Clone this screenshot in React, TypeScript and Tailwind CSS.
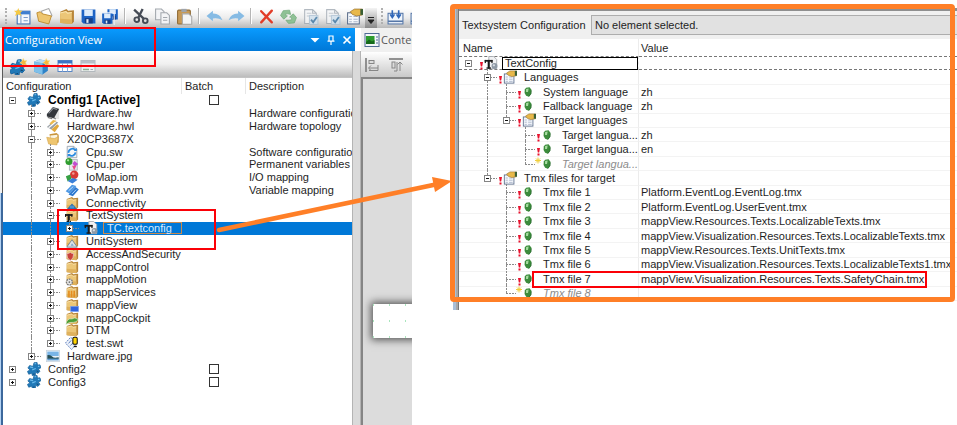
import type { ReactNode } from "react";

const FONT = "font-['Liberation_Sans',Arial,sans-serif]";

/* ---------- icons ---------- */

type IconName =
  | "gear" | "chip" | "topology" | "folderOpen" | "sw" | "per" | "io" | "pv"
  | "connectivity" | "textsystem" | "textconfig" | "unit" | "security" | "folder"
  | "motion" | "services" | "view" | "cockpit" | "swt" | "image" | "bulb" | "group"
  | "new" | "open" | "save" | "saveAll" | "cut" | "copy" | "paste" | "undo" | "redo"
  | "delete" | "refresh" | "docCheck" | "props" | "build" | "gearNew" | "cubeNew"
  | "grid" | "gridOff" | "alignLeft" | "alignTop" | "visual";

const folderShape = (
  <>
    <path d="M2 3.5 L8 1 L9.5 2.5 L15 2 V13 L13 15 L2 14 Z" fill="#b8863a" />
    <path d="M2 4.5 L7.5 3 L9 4.5 L13 4 L13 14.8 L2 13.8 Z" fill="#ecc677" />
    <path d="M2 4.8 L7.5 3.3 L9 4.8 L13 4.3" stroke="#fbe6b0" fill="none" />
    <path d="M2 10 L13 10.8 V14.8 L2 13.8 Z" fill="#dfb15c" />
  </>
);

const gearShape = (
  <g>
    <path
      d="M8 0.8 L11.5 0.5 L12 3.5 L14.8 3.2 L16 6.5 L13 8 L14.8 10.5 L12.5 13 L10 11.8 L9.5 15 L6 15.5 L5.5 12.8 L2 14 L0.5 10.8 L3.2 9 L1 6.8 L3 4 L6.8 5 Z"
      fill="#2079b8"
      stroke="#17619b"
      strokeWidth="0.8"
      strokeLinejoin="round"
    />
    <path d="M8.5 2 L10.5 1.8 M3.5 5.6 L7 6.5 M12.5 5 L14.2 5 M6 9 L10 7.5" stroke="#6cbcec" strokeWidth="1.3" fill="none" />
    <path d="M7 14 L8.5 13.6 M11 10.2 L13 11" stroke="#113f66" fill="none" />
  </g>
);

const pageShape = (
  <path d="M2.5 1.5 H10 L13.5 5 V14.5 H2.5 Z M10 1.5 V5 H13.5" fill="#f4f6f8" stroke="#9aa3ad" strokeWidth="1" />
);

const star = (
  <path d="M12.5 0.5 L13.5 2.6 L15.8 2.4 L14.6 4.4 L15.6 6.4 L13.3 6 L12 7.6 L11.4 5.4 L9.2 4.6 L11.1 3.3 Z" fill="#f6b73c" stroke="#fbe08e" strokeWidth="0.6" />
);

const floppy = (
  <>
    <path d="M1.5 1.5 H14.5 V14.5 H3 L1.5 13 Z" fill="#1d63c4" />
    <rect x="4" y="1.5" width="8" height="6" fill="#dcebfb" />
    <rect x="4.5" y="9.5" width="7.5" height="5" fill="#173f86" />
    <rect x="6" y="10.5" width="2" height="3.5" fill="#dfe9f5" />
  </>
);

const groupShape = (
  <>
    <rect x="1.5" y="4.5" width="11" height="10.5" fill="#f5f8fc" stroke="#5d6f8c" />
    <path d="M3 8 H5.5 M3 10.5 H5.5 M3 13 H5.5 M7 8 H11 M7 10.5 H11 M7 13 H11" stroke="#a9b5c9" />
    <path d="M4 3.5 L8 1 H15.5 V6.5 L10 7.5 L6 6 Z" fill="#e8b84a" stroke="#9a7430" strokeWidth="0.7" />
    <path d="M13.5 1 H16 V6.5 H13.5 Z" fill="#3a5f35" />
  </>
);

const tGlyph = (
  <g fill="#1a1a1a">
    <rect x="0.8" y="4.5" width="9" height="2" />
    <rect x="0.8" y="4.5" width="1.4" height="3.6" />
    <rect x="8.4" y="4.5" width="1.4" height="3.6" />
    <rect x="4.2" y="4.5" width="2.4" height="10" />
    <rect x="2.8" y="13" width="5.2" height="1.5" />
  </g>
);

const ICONS: Record<IconName, ReactNode> = {
  gear: gearShape,
  chip: (
    <>
      <rect x="6" y="2" width="9" height="13" fill="#e4e4e4" />
      <path d="M1 9 L8 1 L15 3.5 L9 14 L1 12 Z" fill="#33363b" />
      <path d="M3 8.5 L8.5 2.5 L12.5 4" stroke="#8c9097" strokeWidth="1.2" fill="none" />
      <path d="M2 13 L7 14.5 M9 13 L11 15" stroke="#777" strokeWidth="1.4" />
    </>
  ),
  topology: (
    <>
      <path d="M1 9 L9 2 L14 4 L6 12 Z" fill="#9aa0a6" />
      <path d="M4 5 L8 1 L12 2 L7 7 Z" fill="#eab84c" />
      <path d="M6 12 L13 6 L15 8 L10 15 Z" fill="#e1a83c" />
      <path d="M3 10 L11 3.5" stroke="#fff" strokeWidth="1.3" />
    </>
  ),
  folderOpen: (
    <>
      <path d="M4 2.5 L12 1 L14.5 3 V12 L6 14 Z" fill="#c9953d" />
      <path d="M5 4 L13 3 V9 L5 10 Z" fill="#fbf5e2" />
      <path d="M0.8 6 L9.5 7.5 L14 5.5 L12.5 14.8 L3 13.8 Z" fill="#efc66f" stroke="#cf9d44" strokeWidth="0.6" />
    </>
  ),
  sw: (
    <>
      {pageShape}
      <path d="M4 9 A4.5 4.5 0 0 1 12 6 M12 8.5 A4.3 4.3 0 0 1 4.5 11" stroke="#2a8be0" strokeWidth="2" fill="none" />
      <path d="M10 6.8 H13.5 V3 Z M6.5 10.2 H3 V14 Z" fill="#2a8be0" />
    </>
  ),
  per: (
    <>
      <rect x="5" y="3" width="9" height="12" fill="#e6e9ec" stroke="#aab1b8" />
      <circle cx="4.5" cy="5" r="4" fill="#2f9c2f" />
      <circle cx="3.5" cy="3.8" r="1.3" fill="#a8e39c" />
      <path d="M11 4.5 L15 8 L11.5 11 L8.5 7.5 Z" fill="#c04fd0" />
      <path d="M8 10 L13 10 L10.5 15 Z" fill="#ea4a8d" />
    </>
  ),
  io: (
    <>
      <circle cx="10.5" cy="5.5" r="4.8" fill="#d83a34" />
      <circle cx="9.5" cy="4" r="1.4" fill="#f39a90" />
      <path d="M1 7 L6 5 L7.5 10 L3 13 Z" fill="#36a043" />
      <path d="M3 12.5 L9 9 L14.5 11 L8.5 15.5 Z" fill="#3a7fd8" />
    </>
  ),
  pv: (
    <>
      <path d="M0.8 9.5 L8 2 L13 3.5 L5 12 Z" fill="#4a95e2" />
      <path d="M4 13 L12 4.5 L15.8 7.5 L9 15 Z" fill="#2e78cf" />
      <path d="M4 9 L9.5 4 M8 12.5 L12.8 7.5" stroke="#bfe0ff" strokeWidth="1.1" />
    </>
  ),
  connectivity: (
    <>
      {folderShape}
      <path d="M2 15 L8 8.5 L14 15 Z" fill="#2f6fa8" />
      <rect x="5.5" y="11" width="5" height="3" fill="#4c92cf" />
    </>
  ),
  textsystem: (
    <>
      {folderShape}
      <g fill="#1a1a1a">
        <rect x="0" y="7" width="8.5" height="2" />
        <rect x="0" y="7" width="1.3" height="3.2" />
        <rect x="7.2" y="7" width="1.3" height="3.2" />
        <rect x="3" y="7" width="2.5" height="9" />
        <rect x="1.8" y="14.6" width="5" height="1.4" />
      </g>
    </>
  ),
  textconfig: (
    <>
      <path d="M5.5 0.5 H11 L14.5 4 V14.5 H5.5 Z" fill="#f1f2f4" stroke="#a3a8ae" />
      {tGlyph}
      <circle cx="12" cy="11.5" r="3.4" fill="#8f9aa6" />
      <circle cx="11.3" cy="10.6" r="1.3" fill="#d6dce2" />
    </>
  ),
  unit: (
    <>
      {folderShape}
      <path d="M2 15 L8 6.5 L14 15 Z" fill="#dde2e7" stroke="#6d8193" />
      <path d="M6.5 13.5 L8 10.5 L10 13.5 Z" fill="#7aa7cf" />
    </>
  ),
  security: (
    <>
      {folderShape}
      <path d="M2 7.5 Q5 7.5 6 6 Q7 7.5 10 7.5 Q10 13.5 6 15.5 Q2 13.5 2 7.5 Z" fill="#c9423a" stroke="#edd3cf" strokeWidth="0.8" />
    </>
  ),
  folder: folderShape,
  motion: (
    <>
      {folderShape}
      <circle cx="5" cy="11.5" r="3.4" fill="#e6e6e6" stroke="#77787a" strokeWidth="1.5" strokeDasharray="2 1" />
      <circle cx="5" cy="11.5" r="1" fill="#707070" />
    </>
  ),
  services: (
    <>
      {folderShape}
      <path d="M4.5 6.5 V14 M7.5 6.5 V14 M10.5 6.5 V14" stroke="#e58c1d" strokeWidth="1.8" />
    </>
  ),
  view: (
    <>
      {folderShape}
      <rect x="6.5" y="9.5" width="9" height="6" fill="#2f63dd" stroke="#7fa3ee" strokeWidth="0.8" />
    </>
  ),
  cockpit: (
    <>
      {folderShape}
      <path d="M1 15.5 Q2 8 8 9 Q11 6.5 15 9.5 Q14 13 9.5 13 Q5 12 1 15.5 Z" fill="#4c9d35" stroke="#dff0d8" strokeWidth="0.7" />
    </>
  ),
  swt: (
    <>
      <path d="M0.5 8 L6.5 1.5 L14 8 L7.5 15.5 Z" fill="#eef3fb" stroke="#4a6fb5" strokeDasharray="2 1" />
      <path d="M4 8.5 L7 5 M6 11 L10 7" stroke="#4a6fb5" />
      <rect x="9" y="1.5" width="5" height="8" rx="1.5" fill="#ffd500" stroke="#111" strokeWidth="1.2" />
      <path d="M10 12 H13.5" stroke="#111" strokeWidth="1.5" />
    </>
  ),
  image: (
    <>
      <rect x="0.5" y="1.5" width="15" height="13" fill="#e9f1f8" stroke="#c3cfda" strokeWidth="0.8" />
      <rect x="1.5" y="3" width="13" height="5" fill="#79b4e6" />
      <path d="M1.5 7 Q5 6 7 8.5 T14.5 9.5 V11.5 H1.5 Z" fill="#274f55" />
      <path d="M1.5 11 H14.5 V13 H1.5 Z" fill="#5f9bd0" />
    </>
  ),
  bulb: (
    <>
      <path d="M5 1 L10.5 0.5 L13.5 4.5 L13 11 L9.5 15.5 L5 14 L2.5 9.5 L2.8 4 Z" fill="#3c8c3c" />
      <path d="M5 3 L9 2.5 L8 8 L4.8 8 Z" fill="#a7dca0" />
      <path d="M9.5 15 L12.8 10.5 L13.2 5.5" stroke="#1d5a25" fill="none" />
    </>
  ),
  group: groupShape,
  new: (
    <>
      <rect x="3" y="3" width="12" height="12" fill="#f4f8fd" stroke="#3e6fb2" />
      <rect x="3" y="3" width="12" height="3" fill="#3f7fd0" />
      <path d="M6.5 6 V15 M9 9 H13 M9 12 H13" stroke="#7c9cc8" />
      <path d="M4 0 L5 2.6 L8 2.6 L6 4.5 L7 7.5 L4 5.8 L1 7.5 L2 4.5 L0 2.6 L3 2.6 Z" fill="#f5c944" />
    </>
  ),
  open: (
    <>
      <path d="M5 3 L12 0.5 L15 7 L9 13 Z" fill="#fff" stroke="#a9a9a9" />
      <path d="M0.8 4.5 L4 3.5 L6 5.5 L14.5 7.5 L12 15 L2.5 12.5 Z" fill="#eec670" stroke="#b98527" strokeWidth="0.8" />
    </>
  ),
  save: floppy,
  saveAll: (
    <>
      <g transform="translate(4 0) scale(.75)">{floppy}</g>
      <path d="M0 4.5 H11.5 V16" stroke="#e8f0fa" fill="none" />
      <g transform="translate(-1 4) scale(.75)">{floppy}</g>
    </>
  ),
  cut: (
    <g stroke="#454b55" fill="none">
      <path d="M2 1.5 L11 10 M10 1 L6 9" strokeWidth="2.2" />
      <circle cx="4.5" cy="11" r="2.2" strokeWidth="1.8" />
      <circle cx="12.5" cy="12" r="2.2" strokeWidth="1.8" />
    </g>
  ),
  copy: (
    <g fill="#f3f4f6" stroke="#a2a7ad">
      <path d="M1.5 1 H7 L9.5 3.5 V11 H1.5 Z" />
      <path d="M6.5 4.5 H12 L14.5 7 V15 H6.5 Z" />
      <path d="M8.5 9 H12.5 M8.5 11.5 H12.5" />
    </g>
  ),
  paste: (
    <>
      <rect x="1.5" y="2" width="12" height="13" rx="1" fill="#c79a56" stroke="#8f6a33" />
      <rect x="5" y="0.8" width="5" height="3" fill="#9ea4ab" />
      <path d="M6 5.5 H12 L14.8 8 V15.3 H6 Z" fill="#f4f5f6" stroke="#a9a9a9" />
    </>
  ),
  undo: <path d="M0.5 7.5 L6.5 2.5 V5.3 Q13 5 15.5 11.5 Q11.5 9 6.5 9.8 V12.5 Z" fill="#86bbe4" />,
  redo: <path d="M15.5 7.5 L9.5 2.5 V5.3 Q3 5 0.5 11.5 Q4.5 9 9.5 9.8 V12.5 Z" fill="#86bbe4" />,
  delete: <path d="M3 3 L13 13.5 M13 2.5 L3 13.5" stroke="#e23c28" strokeWidth="2.2" strokeLinecap="round" />,
  refresh: (
    <g fill="#8fc195" stroke="#6ba574" strokeWidth="0.6">
      <path d="M0.5 7 L3 2.5 L9 2 L10 6 L7.5 5.5 L5.5 5.5 L5.5 7 L7 7.5 L3.5 10.5 Z" />
      <path d="M15.5 9 L13.5 14 L8 14.5 L5.5 11.5 L8.5 11.5 L11 11 L10.8 9 L9 8.5 L12.5 5.5 Z" />
    </g>
  ),
  docCheck: (
    <g opacity="0.75">
      {pageShape}
      <path d="M4.5 5 H9 M4.5 7.5 H11" stroke="#b4bcc4" />
      <rect x="7" y="7" width="8" height="8.5" fill="#cfe0ee" stroke="#a9bfd2" />
      <path d="M8.5 11 L10.5 13.5 L14 8.5" stroke="#2f6c9c" strokeWidth="1.7" fill="none" />
    </g>
  ),
  props: groupShape,
  build: (
    <>
      <rect x="1" y="5" width="14" height="10" fill="#f1f6fc" stroke="#5677a8" />
      <path d="M1 12.5 H15" stroke="#5677a8" strokeWidth="1.5" />
      <path d="M5 2 V8 M11 2 V8 M3 6 L5 9 L7 6 M9 6 L11 9 L13 6" stroke="#2f66b8" strokeWidth="1.5" fill="none" />
    </>
  ),
  gearNew: (
    <>
      <g transform="translate(-1 1)">{gearShape}</g>
      {star}
    </>
  ),
  cubeNew: (
    <>
      <path d="M1 3.5 L6 1.5 L14 2.5 V12 L9 15.5 L1 13 Z" fill="#2f83c8" />
      <path d="M1 3.5 L9 5 V15.5 L1 13 Z" fill="#7fc0ea" />
      <path d="M1 3.5 L6 1.5 L14 2.5 L9 5 Z" fill="#b6dcf5" />
      {star}
    </>
  ),
  grid: (
    <>
      <rect x="1" y="2.5" width="14" height="11" fill="#fff" stroke="#5b87c4" />
      <rect x="1" y="2.5" width="14" height="3" fill="#3c74c6" />
      <path d="M1 9.5 H15 M5.5 5 V13.5 M10.5 5 V13.5" stroke="#8aabdc" />
    </>
  ),
  gridOff: (
    <>
      <rect x="1" y="2.5" width="14" height="11" fill="#eef0f1" stroke="#b3b9bd" />
      <rect x="1" y="2.5" width="14" height="3" fill="#b7c0c8" />
      <path d="M7 8 H13 M3 11.5 H9" stroke="#8fae92" strokeWidth="1.3" />
      <path d="M3 8 H5.5 M10.5 11.5 H13" stroke="#a0a9b0" />
    </>
  ),
  alignLeft: (
    <g stroke="#868686" fill="none">
      <path d="M2 1 V15" strokeWidth="1.8" />
      <rect x="5" y="3.5" width="5" height="3" fill="#ddd" />
      <path d="M5 11 H14 M7 8.5 L4.5 11 L7 13.5 M14 8 V13.5 H5" />
    </g>
  ),
  alignTop: (
    <g stroke="#868686" fill="none">
      <path d="M1 2 H15" strokeWidth="1.8" />
      <rect x="4" y="5" width="3" height="6" fill="#ddd" />
      <path d="M12 14 V5 M9.5 7.5 L12 5 L14.5 7.5 M9 5 V14 H6" />
    </g>
  ),
  visual: (
    <>
      <rect x="1" y="1.5" width="14" height="13" fill="#f3f6fa" stroke="#4f6a94" />
      <rect x="2" y="4" width="8.5" height="8" fill="#2e9b2e" />
      <path d="M2 10 L5 7.5 L8 9.5 L10.5 8 V12 H2 Z" fill="#15691b" />
      <path d="M12 5 H14 M12 8 H14 M12 11 H14" stroke="#4f6a94" />
    </>
  ),
};

function Icon({ name, className }: { name: IconName; className: string }) {
  return (
    <svg viewBox="0 0 16 16" className={`shrink-0 ${className}`} aria-hidden="true">
      {ICONS[name]}
    </svg>
  );
}

/* ---------- tree building blocks ---------- */

type Node = {
  label: string;
  level: number;
  icon: IconName;
  open?: boolean;
  leaf?: boolean;
  guides?: number[];
  last?: boolean;
  batch?: boolean;
  text?: string;
  ghost?: boolean;
};

const LINE = "#8a8a8a";

function Guides({ node }: { node: Node }) {
  return (
    <>
      {Array.from({ length: node.level }, (_, level) => (
        <svg key={level} viewBox="0 0 19 16" className="h-4 w-[19px] shrink-0" aria-hidden="true">
          {(node.guides ?? []).includes(level) && <path d="M9.5 0 V16" stroke={LINE} strokeDasharray="2 1" />}
        </svg>
      ))}
      <svg viewBox="0 0 19 16" className="h-4 w-[19px] shrink-0" aria-hidden="true">
        {node.level > 0 && (
          <>
            <path d={node.last ? "M9.5 0 V8" : "M9.5 0 V16"} stroke={LINE} strokeDasharray="2 1" />
            <path d="M9 8.5 H19" stroke={LINE} strokeDasharray="2 1" />
          </>
        )}
        {!node.leaf && (
          <>
            <rect x="6.5" y="5.5" width="6" height="6" fill="#fff" stroke="#848484" />
            <path d={node.open ? "M8 8.5 H11" : "M8 8.5 H11 M9.5 7 V10"} stroke="#111" />
          </>
        )}
      </svg>
    </>
  );
}

/* ---------- configuration view ---------- */

const CONFIG_ROWS: Node[] = [
  { label: "Config1 [Active]", level: 0, icon: "gear", open: true, batch: true },
  { label: "Hardware.hw", level: 1, icon: "chip", text: "Hardware configuration" },
  { label: "Hardware.hwl", level: 1, icon: "topology", text: "Hardware topology" },
  { label: "X20CP3687X", level: 1, icon: "folderOpen", open: true },
  { label: "Cpu.sw", level: 2, icon: "sw", guides: [1], text: "Software configuration" },
  { label: "Cpu.per", level: 2, icon: "per", guides: [1], text: "Permanent variables" },
  { label: "IoMap.iom", level: 2, icon: "io", guides: [1], text: "I/O mapping" },
  { label: "PvMap.vvm", level: 2, icon: "pv", guides: [1], text: "Variable mapping" },
  { label: "Connectivity", level: 2, icon: "connectivity", guides: [1] },
  { label: "TextSystem", level: 2, icon: "textsystem", guides: [1], open: true },
  { label: "TC.textconfig", level: 3, icon: "textconfig", guides: [1, 2], last: true },
  { label: "UnitSystem", level: 2, icon: "unit", guides: [1] },
  { label: "AccessAndSecurity", level: 2, icon: "security", guides: [1] },
  { label: "mappControl", level: 2, icon: "folder", guides: [1] },
  { label: "mappMotion", level: 2, icon: "motion", guides: [1] },
  { label: "mappServices", level: 2, icon: "services", guides: [1] },
  { label: "mappView", level: 2, icon: "view", guides: [1] },
  { label: "mappCockpit", level: 2, icon: "cockpit", guides: [1] },
  { label: "DTM", level: 2, icon: "folder", guides: [1] },
  { label: "test.swt", level: 2, icon: "swt", guides: [1], last: true },
  { label: "Hardware.jpg", level: 1, icon: "image", last: true },
  { label: "Config2", level: 0, icon: "gear", batch: true },
  { label: "Config3", level: 0, icon: "gear", batch: true },
];

function ConfigTable() {
  return (
    <table className="h-[310px] w-full table-fixed border-separate border-spacing-0 bg-white">
      <colgroup>
        <col className="w-[179px]" />
        <col className="w-16" />
        <col />
      </colgroup>
      <thead>
        <tr className="text-left">
          <th className="h-4 border-r border-[#e6e6e6] p-0 pl-[3px] font-normal">Configuration</th>
          <th className="h-4 border-r border-[#e6e6e6] p-0 pl-[3px] font-normal">Batch</th>
          <th className="h-4 p-0 pl-[3px] font-normal">Description</th>
        </tr>
      </thead>
      <tbody>
        {CONFIG_ROWS.map((row) => {
          const selected = row.label === "TC.textconfig";
          return (
            <tr key={row.label} className={selected ? "bg-[#0078d7]" : ""}>
              <td className="p-0">
                <div className="flex h-3 items-center">
                  <Guides node={row} />
                  <span className="flex w-6 shrink-0 justify-center">
                    <Icon name={row.icon} className="size-[14px]" />
                  </span>
                  {selected ? (
                    <span className="h-3 flex-1 border border-[#c98a4e] pl-[3px] leading-[11px] text-[#d9ecff]">
                      {row.label}
                    </span>
                  ) : (
                    <span className={row.open && row.level === 0 ? "pl-[2px] text-xs font-bold text-black" : "pl-[2px]"}>
                      {row.label}
                    </span>
                  )}
                </div>
              </td>
              <td className="p-0">
                {row.batch && (
                  <input
                    type="checkbox"
                    aria-label={`Batch ${row.label}`}
                    className="mx-auto block size-[10px] appearance-none border border-[#333] bg-white"
                  />
                )}
              </td>
              <td className="overflow-hidden p-0 pl-[3px]">
                <div className="h-3">{row.text}</div>
              </td>
            </tr>
          );
        })}
      </tbody>
    </table>
  );
}

const TOOL_GROUPS: { name: IconName; label: string }[][] = [
  [
    { name: "new", label: "New" },
    { name: "open", label: "Open project" },
    { name: "folder", label: "Open file" },
    { name: "save", label: "Save" },
    { name: "saveAll", label: "Save all" },
  ],
  [
    { name: "cut", label: "Cut" },
    { name: "copy", label: "Copy" },
    { name: "paste", label: "Paste" },
  ],
  [
    { name: "undo", label: "Undo" },
    { name: "redo", label: "Redo" },
  ],
  [
    { name: "delete", label: "Delete" },
    { name: "refresh", label: "Refresh" },
    { name: "docCheck", label: "Check in" },
    { name: "docCheck", label: "Check out" },
    { name: "props", label: "Properties" },
  ],
];

function Grip() {
  return <span className="h-4 w-0 border-l-2 border-dotted border-[#b0b0b0]" />;
}

function MainToolbar() {
  return (
    <div className="flex h-5 shrink-0 items-center overflow-hidden bg-linear-to-b from-white via-[#ececec] to-[#b9b9b9] pb-1 pl-[5px]">
      <Grip />
      <div className="ml-1 flex items-center">
        {TOOL_GROUPS.map((group, i) => (
          <div key={i} className="flex items-center">
            {i > 0 && <span className="mx-[3px] h-4 w-[2px] border-l border-[#b5b5b5] bg-white" />}
            {group.map((tool) => (
              <button key={tool.label} type="button" aria-label={tool.label} className="flex w-[22px] justify-center">
                <Icon name={tool.name} className="size-[17px]" />
              </button>
            ))}
          </div>
        ))}
      </div>
      <button type="button" aria-label="More" className="-mb-1 flex h-5 w-3 shrink-0 items-end justify-center bg-linear-to-b from-[#f4f4f4] to-[#8a8a8a] pb-1">
        <svg viewBox="0 0 8 8" className="size-2" aria-hidden="true">
          <path d="M1 1.5 H7 M1 4 H7 L4 7.5 Z" stroke="#222" fill="#222" />
        </svg>
      </button>
      <span className="w-1 shrink-0" />
      <Grip />
      <button type="button" aria-label="Build" className="flex w-6 shrink-0 justify-center">
        <Icon name="build" className="size-[17px]" />
      </button>
      <button type="button" aria-label="Rebuild" className="flex w-[22px] shrink-0 justify-center">
        <Icon name="build" className="size-[17px]" />
      </button>
    </div>
  );
}

function ConfigurationView() {
  return (
    <section className="flex w-[349px] shrink-0 flex-col">
      <header className="-mr-[3px] flex h-[23px] shrink-0 items-center bg-linear-to-b from-[#0a9bff] to-[#0078d7] pr-[3px] pl-[2px] text-white">
        <h2 className="flex-1 font-['Open_Sans','Noto_Sans',sans-serif] text-[11px]">Configuration View</h2>
        <div className="flex items-center gap-[6px]">
          <button type="button" aria-label="Menu">
            <svg viewBox="0 0 10 10" className="size-[10px]"><path d="M0.5 3 H9.5 L5 7.5 Z" fill="#fff" /></svg>
          </button>
          <button type="button" aria-label="Pin">
            <svg viewBox="0 0 10 10" className="size-[10px]">
              <path d="M3 1 H7 V6 H3 Z M1.5 6.2 H8.5 M5 6 V10" stroke="#fff" strokeWidth="1.2" fill="none" />
            </svg>
          </button>
          <button type="button" aria-label="Close">
            <svg viewBox="0 0 10 10" className="size-[10px]">
              <path d="M1.5 1.5 L8.5 8.5 M8.5 1.5 L1.5 8.5" stroke="#fff" strokeWidth="1.7" />
            </svg>
          </button>
        </div>
      </header>
      <div className="flex h-[27px] shrink-0 items-center border-b border-[#c4c4c4] bg-linear-to-b from-white via-[#f0f0f0] to-[#bcbcbc] pt-1 pl-1">
        {(["gearNew", "cubeNew", "grid", "gridOff"] as IconName[]).map((name) => (
          <button key={name} type="button" aria-label={name} className="flex w-[23px] justify-center">
            <Icon name={name} className={name === "gearNew" || name === "cubeNew" ? "size-[17px]" : "size-4"} />
          </button>
        ))}
      </div>
      <ConfigTable />
      <div className="flex-1 bg-white" />
    </section>
  );
}

function EditorPane() {
  return (
    <section className="flex min-w-0 flex-1 flex-col overflow-hidden">
      <div className="flex h-6 shrink-0 items-center gap-px bg-[#f0f0f0] pl-[3px]">
        <Icon name="visual" className="size-4" />
        <span className="font-['Open_Sans','Noto_Sans',sans-serif] text-[11px] text-[#555]">Content</span>
      </div>
      <div className="flex h-[25px] shrink-0 items-center gap-2 bg-linear-to-b from-white to-[#c9c9c9] pl-[3px]">
        <button type="button" aria-label="Align left"><Icon name="alignLeft" className="block size-4" /></button>
        <button type="button" aria-label="Align top"><Icon name="alignTop" className="block size-4" /></button>
      </div>
      <div className="flex-1 overflow-hidden border-t-2 border-l-2 border-[#858585] bg-[#dcdcdc] pt-[225px] pl-[10px]">
        <div className="grid h-[34px] w-20 grid-cols-[16px_16px_1fr] content-between bg-white shadow-[0_0_8px_2px_#555]">
          {Array.from({ length: 9 }, (_, i) => (
            <span key={i} className="h-[2px] w-px bg-[#a9e6bd]" />
          ))}
        </div>
      </div>
    </section>
  );
}

function RedBox({ className }: { className: string }) {
  return <div className={`pointer-events-none absolute border-2 border-[#fb0007] ${className}`} />;
}

function StudioWindow() {
  return (
    <div className="relative flex h-[417px] w-[412px] shrink-0 flex-col">
      <MainToolbar />
      <div className="flex min-h-0 flex-1">
        <div className="flex w-[3px] shrink-0 flex-col">
          <div className="h-[165px] border-r border-[#5a5a5a] bg-[#f2f2f2]" />
          <div className="flex-1 border-r-2 border-[#3c689c] bg-[#b5d3f3]" />
        </div>
        <ConfigurationView />
        <div className="mt-[23px] w-[9px] shrink-0 border-x border-[#b4b4b4] bg-[#dadada]" />
        <EditorPane />
      </div>
      <RedBox className="top-[19px] left-[2px] h-10 w-[154px]" />
      <RedBox className="top-[201px] left-[57px] h-[41px] w-[159px]" />
    </div>
  );
}

/* ---------- text system configuration ---------- */

const TEXT_ROWS: Node[] = [
  { label: "TextConfig", level: 0, icon: "textconfig", open: true },
  { label: "Languages", level: 1, icon: "group", open: true },
  { label: "System language", level: 2, icon: "bulb", leaf: true, guides: [1], text: "zh" },
  { label: "Fallback language", level: 2, icon: "bulb", leaf: true, guides: [1], text: "zh" },
  { label: "Target languages", level: 2, icon: "group", open: true, last: true, guides: [1] },
  { label: "Target langua...", level: 3, icon: "bulb", leaf: true, guides: [1], text: "zh" },
  { label: "Target langua...", level: 3, icon: "bulb", leaf: true, guides: [1], text: "en" },
  { label: "Target langua...", level: 3, icon: "bulb", leaf: true, last: true, ghost: true, guides: [1] },
  { label: "Tmx files for target", level: 1, icon: "group", open: true, last: true },
  { label: "Tmx file 1", level: 2, icon: "bulb", leaf: true, text: "Platform.EventLog.EventLog.tmx" },
  { label: "Tmx file 2", level: 2, icon: "bulb", leaf: true, text: "Platform.EventLog.UserEvent.tmx" },
  { label: "Tmx file 3", level: 2, icon: "bulb", leaf: true, text: "mappView.Resources.Texts.LocalizableTexts.tmx" },
  { label: "Tmx file 4", level: 2, icon: "bulb", leaf: true, text: "mappView.Visualization.Resources.Texts.LocalizableTexts.tmx" },
  { label: "Tmx file 5", level: 2, icon: "bulb", leaf: true, text: "mappView.Resources.Texts.UnitTexts.tmx" },
  { label: "Tmx file 6", level: 2, icon: "bulb", leaf: true, text: "mappView.Visualization.Resources.Texts.LocalizableTexts1.tmx" },
  { label: "Tmx file 7", level: 2, icon: "bulb", leaf: true, text: "mappView.Visualization.Resources.Texts.SafetyChain.tmx" },
  { label: "Tmx file 8", level: 2, icon: "bulb", leaf: true, last: true, ghost: true },
];

function Mark({ ghost }: { ghost?: boolean }) {
  return (
    <svg viewBox="0 0 6 14" className="h-[14px] w-[6px] shrink-0" aria-hidden="true">
      {ghost ? (
        <path d="M3 0.5 V6.5 M0 3.5 H6 M1 1.5 L5 5.5 M5 1.5 L1 5.5" stroke="#f0cf3c" />
      ) : (
        <path d="M2 6 H5 L4.2 10.5 H2.8 Z M2.5 11.5 H4.5 V13.5 H2.5 Z" fill="#e8112d" />
      )}
    </svg>
  );
}

function TextConfigTable() {
  return (
    <table className="h-[262px] w-full table-fixed border-separate border-spacing-0 bg-white">
      <colgroup>
        <col className="w-[180px]" />
        <col />
      </colgroup>
      <thead>
        <tr className="text-left">
          <th className="h-[17px] border-r border-[#ececec] p-0 pl-1 font-normal">Name</th>
          <th className="h-[17px] p-0 pl-[2px] font-normal">Value</th>
        </tr>
      </thead>
      <tbody>
        {TEXT_ROWS.map((row, i) => {
          const root = row.level === 0;
          const line = root ? "border-y border-dashed border-[#777]" : "border-b border-[#f3f3f3]";
          return (
            <tr key={i}>
              <td className={`border-r border-r-[#ececec] p-0 ${line}`}>
                <div className={`flex items-center ${root ? "h-3" : "h-[13px]"}`}>
                  <Guides node={row} />
                  <Mark ghost={row.ghost} />
                  <Icon name={row.icon} className={row.icon === "bulb" ? "mr-[10px] ml-px size-[10px]" : "mr-1 size-[14px]"} />
                  {root ? (
                    <span className="h-[13px] flex-1 border border-black pl-[2px] leading-[11px]">{row.label}</span>
                  ) : (
                    <span className={row.ghost ? "text-[#8c8c8c] italic" : row.leaf ? "" : "pl-[3px]"}>{row.label}</span>
                  )}
                </div>
              </td>
              <td className={`p-0 pl-[2px] ${line}`}>{row.text}</td>
            </tr>
          );
        })}
      </tbody>
    </table>
  );
}

function TextSystemPanel() {
  return (
    <div className="relative ml-[41px] flex h-[302px] min-w-0 flex-1 items-stretch">
      <div className="w-[6px] shrink-0 border-r border-l-[3px] border-r-[#777] border-l-[#a9bfd8] bg-[#a8a8a8]" />
      <section className="flex min-w-0 flex-1 flex-col border-t-[3px] border-[#8f8f8f] bg-white">
        <div className="flex h-7 shrink-0 items-center bg-[#f0f0f0] pl-[3px]">
          <label htmlFor="selected-element" className="w-[129px] shrink-0">Textsystem Configuration</label>
          <input
            id="selected-element"
            readOnly
            value="No element selected."
            className="h-5 min-w-0 flex-1 border border-r-0 border-[#adadad] bg-[#e1e1e1] px-[3px] outline-none"
          />
        </div>
        <TextConfigTable />
      </section>
      <div className="pointer-events-none absolute -top-1 right-[2px] -left-[3px] h-[298px] rounded-sm border-[5px] border-[#ff7f27]" />
      <RedBox className="top-[263px] left-[79px] h-[17px] w-[395px]" />
    </div>
  );
}

export default function App() {
  return (
    <main className={`relative flex min-h-screen items-start bg-white pt-2 text-[11px] leading-3 whitespace-nowrap text-[#1e1e1e] ${FONT}`}>
      <StudioWindow />
      <TextSystemPanel />
      <svg viewBox="0 0 250 70" className="pointer-events-none absolute top-[170px] left-[210px] h-[70px] w-[250px]" aria-hidden="true">
        <path d="M9 60 L228 14" stroke="#ff7f27" strokeWidth="4.5" strokeLinecap="round" />
        <path d="M242 11 L222 7 L225 22 Z" fill="#ff7f27" />
      </svg>
    </main>
  );
}
